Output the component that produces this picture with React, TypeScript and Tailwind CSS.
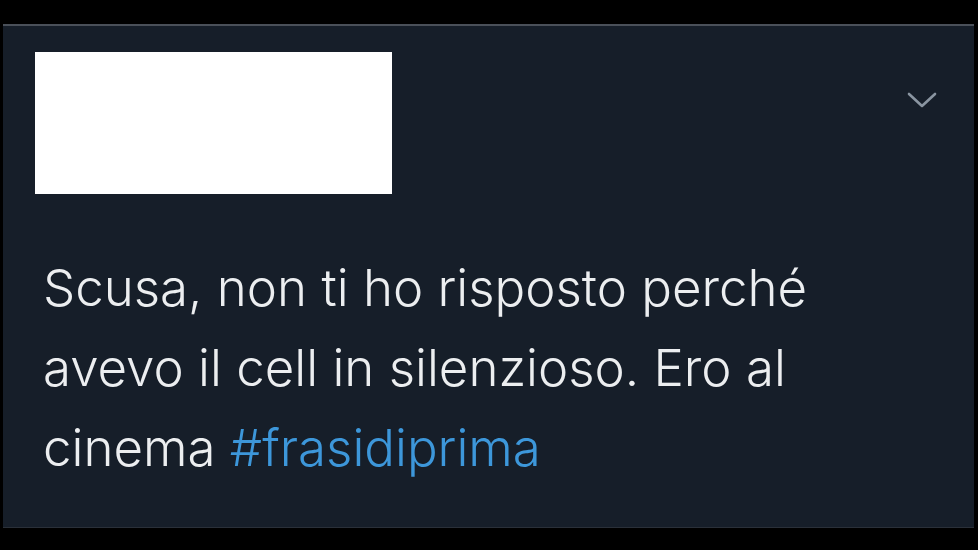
export default function App() {
  return (
    <div className="w-[978px] h-[550px] bg-black pt-[24px] pl-[3px] pr-[4px] pb-[22px] flex">
      <div className="flex-1 flex flex-col bg-[#161e29] border-t-2 border-t-[#4a5059] border-b border-b-[#2a3039]">
        <div className="flex items-start justify-between pl-[32px] pr-[37px] pt-[26px]">
          <div className="w-[357px] h-[142px] bg-white" />
          <svg width="30" height="16" viewBox="0 0 30 16" className="mt-[40px]">
            <path d="M2 2 L15 14 L28 2" fill="none" stroke="#8a95a1" strokeWidth="2.6" strokeLinecap="round" strokeLinejoin="round" />
          </svg>
        </div>
        <p
          className="mt-[54px] pl-[40px] text-[51px] leading-[80px] text-[#eceef0] font-light"
          style={{ fontFamily: 'Inter, "Liberation Sans", Arial, sans-serif' }}
        >
          Scusa, non ti ho risposto perché
          <br />
          avevo il cell in silenzioso. Ero al
          <br />
          cinema <span className="text-[#3d97da]">#frasidiprima</span>
        </p>
      </div>
    </div>
  );
}
